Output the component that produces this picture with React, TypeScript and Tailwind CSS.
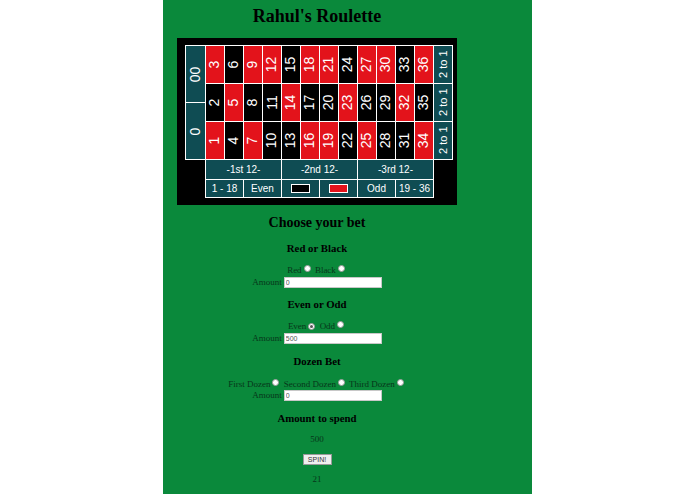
import React from 'react'

const RED = new Set([1, 3, 5, 7, 9, 12, 14, 16, 18, 19, 21, 23, 25, 27, 30, 32, 34, 36])
const rows = [3, 2, 1].map((start) => Array.from({ length: 12 }, (_, i) => start + i * 3))

const serif = { fontFamily: '"Liberation Serif", "Times New Roman", serif' }

function Radio({ checked = false }: { checked?: boolean }) {
  return (
    <span className="inline-flex items-center justify-center w-[7px] h-[7px] rounded-full bg-white border border-[#9a9a9a] align-[1px] mx-[2px]">
      {checked && <span className="w-[3px] h-[3px] rounded-full bg-[#555]" />}
    </span>
  )
}

function AmountRow({ value, className = '' }: { value: string; className?: string }) {
  return (
    <div className={`flex items-center justify-center h-[11px] ${className}`}>
      <span className="text-[9px] leading-[11px] text-[#07361a] mr-[2px]">Amount</span>
      <input
        readOnly
        value={value}
        className="w-[98px] h-[11px] bg-white border border-[#c8c8c8] px-px text-[7px] text-[#555] outline-none"
        style={{ fontFamily: '"Liberation Sans", Arial, sans-serif' }}
      />
    </div>
  )
}

function Board() {
  const teal = 'bg-[#0f4c53]'
  const boardFont = { fontFamily: '"Liberation Sans", Arial, sans-serif' }
  return (
    <div className="w-[280px] h-[167px] bg-black pt-[7px] pl-[8px] mx-auto" style={boardFont}>
      <div className="flex bg-white p-px gap-px w-fit">
        <div className="flex flex-col gap-px w-[19px]">
          {['00', '0'].map((z) => (
            <div key={z} className={`flex-1 flex items-center justify-center ${teal}`}>
              <span className="inline-block -rotate-90 text-white text-[14px]">{z}</span>
            </div>
          ))}
        </div>
        <div className="grid grid-cols-[repeat(12,18px)] grid-rows-[repeat(3,37px)] gap-px">
          {rows.flat().map((n) => (
            <div key={n} className={`flex items-center justify-center ${RED.has(n) ? 'bg-[#e3131b]' : 'bg-black'}`}>
              <span className="inline-block -rotate-90 text-white text-[14px]">{n}</span>
            </div>
          ))}
        </div>
        <div className="flex flex-col gap-px w-[18px]">
          {[0, 1, 2].map((i) => (
            <div key={i} className={`flex-1 flex items-center justify-center ${teal}`}>
              <span className="inline-block -rotate-90 whitespace-nowrap text-white text-[11px]">2 to 1</span>
            </div>
          ))}
        </div>
      </div>
      <div className="ml-[20px] w-[229px] bg-white px-px pb-px grid grid-cols-6 grid-rows-[19px_17px] gap-px text-white text-[10px]">
        {['-1st 12-', '-2nd 12-', '-3rd 12-'].map((d) => (
          <div key={d} className={`col-span-2 flex items-center justify-center ${teal}`}>{d}</div>
        ))}
        <div className={`flex items-center justify-center ${teal}`}>1 - 18</div>
        <div className={`flex items-center justify-center ${teal}`}>Even</div>
        <div className={`flex items-center justify-center ${teal}`}>
          <span className="w-[19px] h-[9px] bg-black border border-white" />
        </div>
        <div className={`flex items-center justify-center ${teal}`}>
          <span className="w-[19px] h-[9px] bg-[#e3131b] border border-white" />
        </div>
        <div className={`flex items-center justify-center ${teal}`}>Odd</div>
        <div className={`flex items-center justify-center ${teal}`}>19 - 36</div>
      </div>
    </div>
  )
}

export default function App() {
  return (
    <div className="min-h-[494px] bg-white">
      <div className="ml-[163px] w-[369px] min-h-[494px] bg-[#0a893b]" style={serif}>
        <div className="w-[308px] text-center">
          <h1 className="pt-[5px] text-[18px] leading-[22px] font-bold text-black">Rahul's Roulette</h1>
          <div className="mt-[11px]">
            <Board />
          </div>

          <h2 className="mt-[10px] text-[14px] leading-[16px] font-bold text-black">Choose your bet</h2>

          <h3 className="mt-[11px] text-[10.8px] leading-[13px] font-bold text-black">Red or Black</h3>
          <div className="mt-[10px] text-[9px] leading-[11px] text-[#07361a]">
            Red<Radio /> Black<Radio />
          </div>
          <AmountRow value="0" className="mt-px" />

          <h3 className="mt-[10px] text-[10.8px] leading-[13px] font-bold text-black">Even or Odd</h3>
          <div className="mt-[10px] text-[9px] leading-[11px] text-[#07361a]">
            Even<Radio checked /> Odd<Radio />
          </div>
          <AmountRow value="500" className="mt-px" />

          <h3 className="mt-[11px] text-[10.8px] leading-[13px] font-bold text-black">Dozen Bet</h3>
          <div className="mt-[11px] text-[9px] leading-[11px] text-[#07361a] whitespace-nowrap">
            First Dozen<Radio /> Second Dozen<Radio /> Third Dozen<Radio />
          </div>
          <AmountRow value="0" />

          <h3 className="mt-[11px] text-[10.8px] leading-[13px] font-bold text-black">Amount to spend</h3>
          <div className="mt-[9px] text-[9px] leading-[11px] text-[#07361a]">500</div>
          <div className="mt-[9px] flex justify-center">
            <button
              className="h-[11px] w-[29px] bg-[#efefef] border border-[#9a9a9a] text-[7px] leading-[9px] text-[#333]"
              style={{ fontFamily: '"Liberation Sans", Arial, sans-serif' }}
            >
              SPIN!
            </button>
          </div>
          <div className="mt-[9px] text-[9px] leading-[11px] text-[#07361a]">21</div>
        </div>
      </div>
    </div>
  )
}
